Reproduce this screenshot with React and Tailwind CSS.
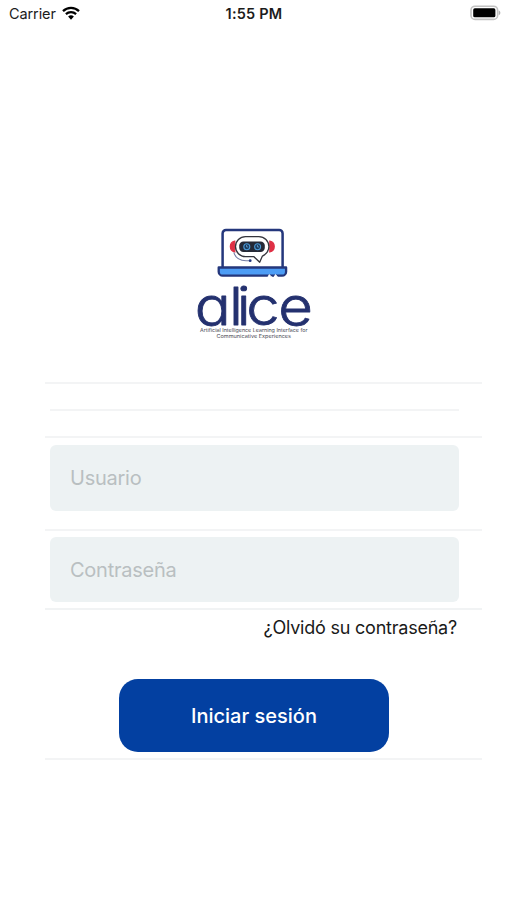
import { useState } from "react";

const FONT = "font-['Inter','Liberation_Sans',sans-serif]";

const StatusBar = () => (
  <div className="grid grid-cols-3 items-center h-7 pl-[9px] pr-[6px] text-[#1c1c1c]">
    <div className="flex items-center gap-[6px]">
      <span className="text-[14.5px] leading-7 tracking-[-0.1px]">Carrier</span>
      <svg width="18" height="14" viewBox="0 0 18 14" fill="none" className="-mt-[2px]">
        <path d="M1 5.1a11.6 11.6 0 0 1 16 0" stroke="#000" strokeWidth="2.3" />
        <path d="M3.9 8.1a7.4 7.4 0 0 1 10.2 0" stroke="#000" strokeWidth="2.2" />
        <path d="M9 13.7 6.1 10.6a4.2 4.2 0 0 1 5.8 0Z" fill="#000" />
      </svg>
    </div>
    <span className="-ml-[2px] text-center text-[14.5px] leading-7 font-semibold tracking-[0.2px]">
      1:55 PM
    </span>
    <div className="flex justify-end">
      <svg width="31" height="16" viewBox="0 0 31 16" className="-mt-[2px]">
        <rect x="1" y="1.2" width="26.6" height="13.2" rx="4" fill="#fff" stroke="#c2c2c2" strokeWidth="1.6" />
        <rect x="3.2" y="3.3" width="22.2" height="9" rx="1.6" fill="#000" />
        <path d="M28.7 5.6c2.2.7 2.2 3.9 0 4.6Z" fill="#b0b0b0" />
      </svg>
    </div>
  </div>
);

const Logo = () => (
  <svg width="130" height="120" viewBox="190 225 130 120" className="ml-[190px]">
    {/* Laptop */}
    <path
      d="M222.6 267.500V233.400a3.4 3.4 0 0 1 3.4-3.400h53.200a3.4 3.4 0 0 1 3.4 3.400V267.500"
      fill="#fff"
      stroke="#24377c"
      strokeWidth="2.5"
    />
    <path
      d="M218.700 267.500h67.400v4.200a4 4 0 0 1-4 4h-59.400a4 4 0 0 1-4-4Z"
      fill="#4d9df5"
      stroke="#24377c"
      strokeWidth="2.300"
      strokeLinejoin="round"
    />
    <path d="M267.8 277.400l1.500-2.800 1.500 1.800 1.400 1ZM274 277.400l1.500-2.800 1.500 1.800 1 1Z" fill="#fff" stroke="#fff" />

    {/* Robot head */}
    <path
      d="M234.800 241.200v10.800a5.500 5.500 0 0 1 0-10.800ZM269.800 241.200v10.800a5.500 5.500 0 0 0 0-10.800Z"
      fill="#df3045"
      stroke="#df3045"
      strokeWidth="1.200"
    />
    <path d="M233.8 252.4c1.5 5.2 5.8 8.2 12.2 8.3h4" fill="none" stroke="#747da5" strokeWidth="1.1" />
    <circle cx="250.2" cy="260.7" r="1.4" fill="#24377c" />
    <path
      d="M245.500 236.600h13.400a10 10 0 0 1 10 10c0 4.3-2.4 7.4-6.5 9.500l-2.700 6.100-6-5.600H245.500a10 10 0 0 1 0-20Z"
      fill="#fff"
      stroke="#34353d"
      strokeWidth="1.3"
      strokeLinejoin="round"
    />
    <rect x="239.200" y="241.400" width="25.600" height="10.600" rx="4.200" fill="#252936" />
    <g fill="#18375a" stroke="#4c9ad6" strokeWidth="1.1">
      <circle cx="246.800" cy="246.700" r="3" />
      <circle cx="257.600" cy="246.700" r="3" />
    </g>
    <path d="M246.600 245v2h1.600M257.400 245v2h1.600" fill="none" stroke="#78b9e8" strokeWidth=".7" />

    {/* Wordmark */}
    <text
      transform="translate(190 324.6) scale(1.14 1)"
      x="4.1 34.3 41 49.4 77.4"
      y="0"
      fontSize="52.5"
      fontWeight="350"
      fill="#24316f"
      stroke="#24316f"
      strokeWidth=".8"
      strokeLinejoin="round"
      className="[font-feature-settings:'cv11','ss03']"
    >
      alice
    </text>
    <g fontSize="4.6" fill="#44444e">
      <text x="200" y="332.4" textLength="107.5" lengthAdjust="spacingAndGlyphs">
        Artificial Intelligence Learning Interface for
      </text>
      <text x="216.5" y="338" textLength="74.5" lengthAdjust="spacingAndGlyphs">
        Communicative Experiences
      </text>
    </g>
  </svg>
);

const inputClass =
  "block ml-[5px] w-[409px] rounded-[6px] bg-[#edf2f3] px-5 text-[20px] tracking-[-0.25px] text-gray-800 placeholder:text-[#b9bfc1] outline-none";

const App = () => {
  const [formData, setFormData] = useState({ usuario: "", contrasena: "" });

  const handleChange = (e) => {
    setFormData({ ...formData, [e.target.name]: e.target.value });
  };

  return (
    <div className={`w-full h-[900px] bg-white overflow-hidden ${FONT}`}>
      <StatusBar />

      <div className="pt-[197px]">
        <Logo />
      </div>

      <form
        onSubmit={(e) => e.preventDefault()}
        className="mt-[37px] ml-[45px] w-[437px] border-y-2 border-[#f3f4f5]"
      >
        <div className="h-[52px] pt-[25px]">
          <div className="ml-[5px] w-[409px] h-[2px] bg-[#f3f4f5]" />
        </div>

        <div className="h-[93px] border-t-2 border-[#f3f4f5] pt-[7px]">
          <input
            name="usuario"
            placeholder="Usuario"
            value={formData.usuario}
            onChange={handleChange}
            className={`${inputClass} h-[66px]`}
          />
        </div>

        <div className="h-[79px] border-t-2 border-[#f3f4f5] pt-[6px]">
          <input
            type="password"
            name="contrasena"
            placeholder="Contraseña"
            value={formData.contrasena}
            onChange={handleChange}
            className={`${inputClass} h-[65px]`}
          />
        </div>

        <div className="h-[150px] border-t-2 border-[#f1f3f4] pr-[25px] flex flex-col">
          <a href="#" className="self-end mt-[4px] text-[18px] leading-7 tracking-[-0.22px] text-[#1a1a1a]">
            ¿Olvidó su contraseña?
          </a>
          <button
            type="submit"
            className="mt-[37px] ml-[74px] w-[270px] h-[73px] shrink-0 rounded-[19px] bg-[#0340a1] text-white text-[20px] font-medium"
          >
            Iniciar sesión
          </button>
        </div>
      </form>
    </div>
  );
};

export default App;
